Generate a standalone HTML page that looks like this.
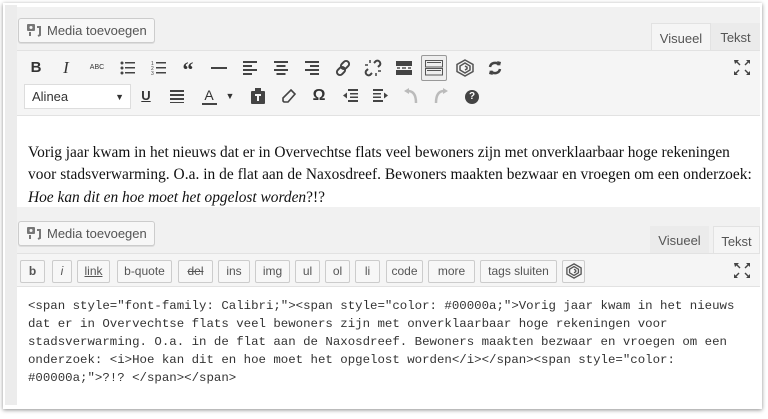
<!DOCTYPE html>
<html><head><meta charset="utf-8"><style>
*{box-sizing:border-box;margin:0;padding:0}
body{width:768px;height:419px;background:#fff;position:relative;overflow:hidden;font-family:"Liberation Sans",sans-serif;color:#444}
.a{position:absolute}
.frame{left:3px;top:3px;width:759px;height:406px;background:#fff;box-shadow:0 1px 4px rgba(0,0,0,.45)}
.strip{left:5px;top:5px;width:12px;height:400px;background:#ececec}
.gray{background:#f1f1f1}
.tb{background:#f5f5f5;border-top:1px solid #e2e2e2;border-bottom:1px solid #e2e2e2}
.btn{position:absolute;background:#f7f7f7;border:1px solid #ccc;border-radius:3px;font-size:13px;color:#555;text-align:center;box-shadow:0 1px 0 #ddd}
.tab{position:absolute;font-size:13px;color:#555;padding-top:7px;text-align:center}
.ic{position:absolute;font-size:14px;color:#333;text-align:center;width:24px;line-height:20px;font-weight:bold}
.sv{position:absolute}
.qt{position:absolute;height:23px;top:260px;background:#f7f7f7;border:1px solid #ccc;border-radius:2px;font-size:12px;color:#555;text-align:center;line-height:21px}
.txt{font-family:"Liberation Serif",serif;font-size:15.4px;color:#111;white-space:nowrap;left:28px}
.code{font-family:"Liberation Mono",monospace;font-size:12.4px;color:#333;white-space:nowrap;left:28px}
</style></head><body>
<div class="a frame"></div>
<div class="a strip"></div>
<!-- top panel -->
<div class="a gray" style="left:17px;top:7px;width:743px;height:44px"></div>
<div class="btn" style="left:18px;top:18px;width:137px;height:25px;line-height:23px;text-align:left;padding-left:28px">Media toevoegen</div>
<svg class="a" style="left:26px;top:23px" width="16" height="15" viewBox="0 0 16 15"><rect x="1" y="1" width="8" height="7" rx="1" fill="#777"/><circle cx="5" cy="4.5" r="1.5" fill="#f7f7f7"/><path d="M4 9v4M11 4h3v8l-2 1" stroke="#777" stroke-width="2" fill="none"/></svg>
<div class="tab" style="left:651px;top:23px;width:60px;height:28px;background:#f5f5f5;border:1px solid #e2e2e2;border-bottom:none;color:#555">Visueel</div>
<div class="tab" style="left:711px;top:23px;width:49px;height:27px;background:#ebebeb;color:#555">Tekst</div>
<div class="a tb" style="left:17px;top:50px;width:743px;height:66px"></div>
<div class="ic" style="left:24px;top:58px;font-size:15px">B</div>
<div class="ic" style="left:54px;top:58px;font-style:italic;font-family:'Liberation Serif',serif;font-size:17px;font-weight:normal">I</div>
<div class="ic" style="left:85px;top:58px;font-size:7px;font-weight:normal">ABC</div>
<svg class="sv" style="left:120px;top:61px" width="16" height="14"><g fill="#444"><circle cx="2" cy="2" r="1.5"/><circle cx="2" cy="7" r="1.5"/><circle cx="2" cy="12" r="1.5"/><rect x="5" y="1" width="10" height="1.5"/><rect x="5" y="6" width="10" height="1.5"/><rect x="5" y="11" width="10" height="1.5"/></g></svg>
<svg class="sv" style="left:151px;top:61px" width="16" height="14"><g fill="#444" font-size="5" font-family="Liberation Sans"><text x="0" y="4">1</text><text x="0" y="9">2</text><text x="0" y="14">3</text><rect x="5" y="1" width="10" height="1.5"/><rect x="5" y="6" width="10" height="1.5"/><rect x="5" y="11" width="10" height="1.5"/></g></svg>
<div class="ic" style="left:176px;top:60px;font-size:22px;font-family:'Liberation Serif',serif">“</div>
<svg class="sv" style="left:211px;top:67px" width="16" height="3"><rect width="16" height="2" fill="#444"/></svg>
<svg class="sv" style="left:243px;top:60px" width="14" height="16"><g fill="#444"><rect y="1" width="14" height="2"/><rect y="5" width="9" height="2"/><rect y="9" width="14" height="2"/><rect y="13" width="9" height="2"/></g></svg>
<svg class="sv" style="left:274px;top:60px" width="14" height="16"><g fill="#444"><rect y="1" width="14" height="2"/><rect x="2.5" y="5" width="9" height="2"/><rect y="9" width="14" height="2"/><rect x="2.5" y="13" width="9" height="2"/></g></svg>
<svg class="sv" style="left:305px;top:60px" width="14" height="16"><g fill="#444"><rect y="1" width="14" height="2"/><rect x="5" y="5" width="9" height="2"/><rect y="9" width="14" height="2"/><rect x="5" y="13" width="9" height="2"/></g></svg>
<svg class="sv" style="left:334px;top:59px" width="18" height="18" viewBox="0 0 18 18"><g fill="none" stroke="#444" stroke-width="2"><rect x="8" y="1.5" width="6" height="9" rx="3" transform="rotate(45 11 6)"/><rect x="4" y="7.5" width="6" height="9" rx="3" transform="rotate(45 7 12)"/></g></svg>
<svg class="sv" style="left:364px;top:59px" width="18" height="18" viewBox="0 0 18 18"><g fill="none" stroke="#444" stroke-width="2"><path d="M10 4l2-2a3 3 0 0 1 4 4l-2 2M8 14l-2 2a3 3 0 0 1-4-4l2-2"/></g><g stroke="#444" stroke-width="1.5"><path d="M6 1v3M1 6h3M12 17v-3M17 12h-3"/></g></svg>
<svg class="sv" style="left:396px;top:61px" width="16" height="14"><g fill="#444"><rect width="16" height="5"/><rect y="9" width="16" height="5"/><rect x="1" y="6.3" width="3" height="1.4"/><rect x="6" y="6.3" width="4" height="1.4"/><rect x="12" y="6.3" width="3" height="1.4"/></g></svg>
<div class="a" style="left:421px;top:55px;width:26px;height:26px;border:1px solid #999;border-radius:2px;background:#eee"></div>
<svg class="sv" style="left:425px;top:60px" width="18" height="16"><g fill="none" stroke="#555"><rect x="0.5" y="0.5" width="17" height="6.5"/><rect x="0.5" y="8.5" width="17" height="6.5"/></g><g fill="#555"><rect x="2" y="2" width="14" height="1"/><rect x="2" y="10" width="14" height="1"/></g></svg>
<svg class="sv" style="left:456px;top:59px" width="18" height="18" viewBox="0 0 18 18"><g fill="none" stroke="#555" stroke-width="1.5"><path d="M9 1l8 4.5v7L9 17l-8-4.5v-7z"/><path d="M9 4l5 3v4l-5 3-5-3V7z"/><path d="M9 7l2 1.2v1.6L9 11"/></g></svg>
<svg class="sv" style="left:487px;top:60px" width="16" height="16" viewBox="0 0 16 16"><g fill="none" stroke="#444" stroke-width="2.5"><path d="M3 7a5 5 0 0 1 9-2M13 9a5 5 0 0 1-9 2"/></g><path d="M10 1l4 1-1 4zM6 15l-4-1 1-4z" fill="#444"/></svg>
<svg class="sv" style="left:734px;top:60px" width="16" height="15" viewBox="0 0 16 15"><g fill="#444"><path d="M0 0h5l-1.5 1.5 3 3-1 1-3-3L1 4z"/><path d="M16 0v4l-1.5-1.5-3 3-1-1 3-3L12 0z"/><path d="M0 15v-4l1.5 1.5 3-3 1 1-3 3L4 15z"/><path d="M16 15h-4l1.5-1.5-3-3 1-1 3 3L16 11z"/></g></svg>
<div class="a" style="left:24px;top:84px;width:107px;height:25px;background:#fff;border:1px solid #ddd;font-size:13px;color:#333;padding:4px 7px">Alinea<span style="position:absolute;right:6px;font-size:9px;top:7px">▼</span></div>
<div class="ic" style="left:134px;top:86px;text-decoration:underline;font-size:13px">U</div>
<svg class="sv" style="left:170px;top:89px" width="14" height="14"><g fill="#444"><rect y="1" width="14" height="2"/><rect y="5" width="14" height="2"/><rect y="9" width="14" height="2"/><rect y="13" width="14" height="1.5"/></g></svg>
<div class="ic" style="left:197px;top:85px;font-weight:normal">A</div>
<div class="a" style="left:202px;top:103px;width:15px;height:2px;background:#444"></div>
<div class="ic" style="left:218px;top:86px;font-size:9px">▼</div>
<svg class="sv" style="left:251px;top:88px" width="14" height="16"><rect y="3" width="14" height="13" rx="1" fill="#444"/><rect x="4" y="0" width="6" height="4" fill="#444"/><path d="M4 7h6M7 7v6" stroke="#f5f5f5" stroke-width="2"/></svg>
<svg class="sv" style="left:282px;top:89px" width="14" height="14" viewBox="0 0 14 14"><path d="M9 1l4 4-7 8H2L1 12V9z" fill="none" stroke="#444" stroke-width="1.6"/></svg>
<div class="ic" style="left:307px;top:86px;font-size:16px">Ω</div>
<svg class="sv" style="left:343px;top:88px" width="15" height="15"><g fill="#444"><rect x="5" y="1" width="10" height="2"/><rect x="7" y="5" width="8" height="1.5"/><rect x="7" y="8.5" width="8" height="1.5"/><rect x="5" y="12" width="10" height="2"/><path d="M0 7.5l4-3v6z"/></g></svg>
<svg class="sv" style="left:373px;top:88px" width="15" height="15"><g fill="#444"><rect x="0" y="1" width="10" height="2"/><rect x="0" y="5" width="8" height="1.5"/><rect x="0" y="8.5" width="8" height="1.5"/><rect x="0" y="12" width="10" height="2"/><path d="M15 7.5l-4-3v6z"/></g></svg>
<svg class="sv" style="left:404px;top:88px" width="14" height="16" viewBox="0 0 14 16"><path d="M4 3 Q12 3 12 15" fill="none" stroke="#bbb" stroke-width="2.5"/><path d="M0 3l5-3v6z" fill="#bbb"/></svg>
<svg class="sv" style="left:434px;top:88px" width="14" height="16" viewBox="0 0 14 16"><path d="M10 3 Q2 3 2 15" fill="none" stroke="#bbb" stroke-width="2.5"/><path d="M14 3l-5-3v6z" fill="#bbb"/></svg>
<div class="a" style="left:465px;top:90px;width:14px;height:14px;border-radius:50%;background:#444;color:#fff;font-size:10px;font-weight:bold;text-align:center;line-height:14px">?</div>
<div class="a txt" style="top:144px">Vorig jaar kwam in het nieuws dat er in Overvechtse flats veel bewoners zijn met onverklaarbaar hoge rekeningen</div>
<div class="a txt" style="top:166px;letter-spacing:0.03px">voor stadsverwarming. O.a. in de flat aan de Naxosdreef. Bewoners maakten bezwaar en vroegen om een onderzoek:</div>
<div class="a txt" style="top:189px"><i>Hoe kan dit en hoe moet het opgelost worden</i>?!?</div>
<!-- second panel -->
<div class="a gray" style="left:17px;top:207px;width:743px;height:47px"></div>
<div class="btn" style="left:18px;top:221px;width:137px;height:25px;line-height:23px;text-align:left;padding-left:28px">Media toevoegen</div>
<svg class="a" style="left:26px;top:226px" width="16" height="15" viewBox="0 0 16 15"><rect x="1" y="1" width="8" height="7" rx="1" fill="#777"/><circle cx="5" cy="4.5" r="1.5" fill="#f7f7f7"/><path d="M4 9v4M11 4h3v8l-2 1" stroke="#777" stroke-width="2" fill="none"/></svg>
<div class="tab" style="left:650px;top:226px;width:59px;height:27px;background:#ebebeb">Visueel</div>
<div class="tab" style="left:713px;top:226px;width:47px;height:28px;background:#f5f5f5;border:1px solid #e2e2e2;border-bottom:none">Tekst</div>
<div class="a tb" style="left:17px;top:253px;width:743px;height:34px"></div>
<div class="qt" style="left:20px;width:25px;font-weight:bold">b</div>
<div class="qt" style="left:52px;width:20px;font-style:italic">i</div>
<div class="qt" style="left:77px;width:33px;text-decoration:underline">link</div>
<div class="qt" style="left:117px;width:55px">b-quote</div>
<div class="qt" style="left:178px;width:35px;text-decoration:line-through">del</div>
<div class="qt" style="left:218px;width:32px">ins</div>
<div class="qt" style="left:255px;width:35px">img</div>
<div class="qt" style="left:295px;width:25px">ul</div>
<div class="qt" style="left:325px;width:25px">ol</div>
<div class="qt" style="left:355px;width:25px">li</div>
<div class="qt" style="left:386px;width:37px">code</div>
<div class="qt" style="left:428px;width:47px">more</div>
<div class="qt" style="left:480px;width:77px">tags sluiten</div>
<div class="qt" style="left:562px;width:23px"></div>
<svg class="sv" style="left:566px;top:263px" width="16" height="16" viewBox="0 0 18 18"><g fill="none" stroke="#555" stroke-width="1.5"><path d="M9 1l8 4.5v7L9 17l-8-4.5v-7z"/><path d="M9 4l5 3v4l-5 3-5-3V7z"/><path d="M9 7l2 1.2v1.6L9 11"/></g></svg>
<svg class="sv" style="left:734px;top:263px" width="16" height="15" viewBox="0 0 16 15"><g fill="#444"><path d="M0 0h5l-1.5 1.5 3 3-1 1-3-3L1 4z"/><path d="M16 0v4l-1.5-1.5-3 3-1-1 3-3L12 0z"/><path d="M0 15v-4l1.5 1.5 3-3 1 1-3 3L4 15z"/><path d="M16 15h-4l1.5-1.5-3-3 1-1 3 3L16 11z"/></g></svg>
<div class="a code" style="top:297px;line-height:18px">&lt;span style="font-family: Calibri;"&gt;&lt;span style="color: #00000a;"&gt;Vorig jaar kwam in het nieuws<br>dat er in Overvechtse flats veel bewoners zijn met onverklaarbaar hoge rekeningen voor<br>stadsverwarming. O.a. in de flat aan de Naxosdreef. Bewoners maakten bezwaar en vroegen om een<br>onderzoek: &lt;i&gt;Hoe kan dit en hoe moet het opgelost worden&lt;/i&gt;&lt;/span&gt;&lt;span style="color:<br>#00000a;"&gt;?!? &lt;/span&gt;&lt;/span&gt;</div>
</body></html>
